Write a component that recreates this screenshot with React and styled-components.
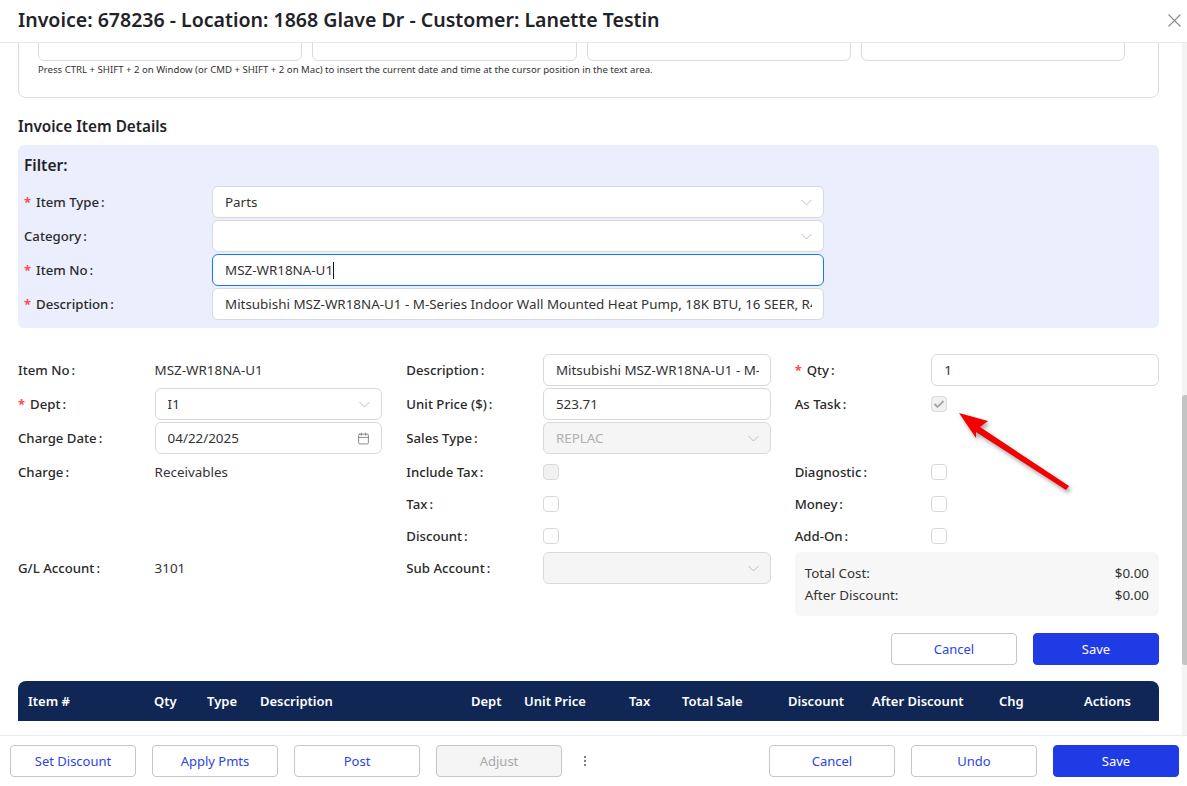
import React from 'react';
import styled, { createGlobalStyle } from 'styled-components';
import { Calendar } from 'lucide-react';

const GlobalStyle = createGlobalStyle`
  html, body {
    margin: 0;
    padding: 0;
    height: 100%;
    overflow: hidden;
    background: #ffffff;
  }
  body {
    font-family: "Noto Sans", "Open Sans", sans-serif;
    font-size: 13.4px;
    color: #333333;
  }
  * {
    box-sizing: border-box;
  }
`;

const Modal = styled.div`
  position: relative;
  display: flex;
  flex-direction: column;
  height: 786px;
  overflow: hidden;
`;

const Header = styled.header`
  flex: none;
  display: flex;
  align-items: center;
  justify-content: space-between;
  height: 43px;
  padding: 0 6px 2px 18px;
  border-bottom: 1px solid #ebebeb;
`;

const Title = styled.h1`
  margin: 0;
  font-size: 19.55px;
  line-height: 26px;
  font-weight: 600;
  color: #1f2329;
`;

const CloseIcon = styled.svg`
  width: 13px;
  height: 13px;
  stroke: #8c8c8c;
  stroke-width: 1.1;
  fill: none;
`;

const Body = styled.div`
  flex: 1;
  min-height: 0;
  display: flex;
  overflow: hidden;
`;

const Content = styled.main`
  flex: 1;
  min-width: 0;
  padding: 0 23px 0 18px;
`;

const ScrollTrack = styled.div`
  flex: none;
  width: 5px;
  background: #f4f4f4;
`;

const ScrollThumb = styled.div`
  height: 270px;
  margin-top: 352px;
  background: #c4c4c4;
  border-radius: 3px 0 0 3px;
`;

const NotesCard = styled.section`
  margin-top: -51px;
  padding: 20px 33px 20px 19px;
  border: 1px solid #dcdcdc;
  border-radius: 8px;
`;

const NotesRow = styled.div`
  display: grid;
  grid-template-columns: repeat(4, 1fr);
  column-gap: 10px;
`;

const NoteBox = styled.div`
  height: 48px;
  border: 1px solid #dcdcdc;
  border-radius: 6px;
`;

const Hint = styled.p`
  margin: 2px 0 0;
  font-size: 9.6px;
  line-height: 14px;
  color: #333333;
  white-space: nowrap;
`;

const SectionTitle = styled.h2`
  margin: 18px 0 9px;
  font-size: 15.3px;
  line-height: 20px;
  font-weight: 600;
  color: #1f2329;
`;

const FilterPanel = styled.section`
  padding: 10px 6px 6px;
  background: #ebeefd;
  border-radius: 6px;
`;

const FilterTitle = styled.h3`
  margin: 0 0 11px;
  font-size: 15.5px;
  line-height: 20px;
  font-weight: 600;
  color: #1f2329;
`;

const FilterRow = styled.div`
  display: grid;
  grid-template-columns: 188px 612px;
  height: 34px;
`;

const Label = styled.label`
  display: flex;
  align-items: center;
  height: 32px;
  font-size: 13.2px;
  font-weight: 500;
  color: #2a2a2a;
  white-space: nowrap;

  &::before {
    content: ${(p) => (p.$required ? '"*"' : 'none')};
    width: 12px;
    color: #ff4d4f;
    font-size: 13px;
    font-weight: 700;
  }

  &::after {
    content: ':';
    margin-left: 2px;
  }
`;

const Control = styled.div`
  display: flex;
  align-items: center;
  min-width: 0;
  height: 32px;
  padding: 0 11px 0 12px;
  background: ${(p) => (p.$disabled ? '#f5f5f5' : '#ffffff')};
  border: 1px solid ${(p) => (p.$focused ? '#1677ff' : '#d9d9d9')};
  border-radius: 6px;
  color: ${(p) => (p.$disabled ? '#b0b0b0' : '#333333')};
`;

const ControlText = styled.span`
  flex: ${(p) => (p.$fit ? 'none' : '1')};
  min-width: 0;
  overflow: hidden;
  white-space: nowrap;
`;

const Caret = styled.span`
  width: 1px;
  height: 17px;
  background: #111111;
`;

const Chevron = styled.svg`
  flex: none;
  width: 11px;
  height: 7px;
  margin-left: 6px;
  fill: none;
  stroke: #bdbdbd;
  stroke-width: 1;
`;

const DateIcon = styled(Calendar)`
  flex: none;
  width: 13px;
  height: 13px;
  color: #777777;
`;

const DetailsGrid = styled.section`
  display: grid;
  grid-template-columns: repeat(3, minmax(0, 1fr));
  grid-template-rows: 34px 34px 34px 32px 32px 32px auto;
  column-gap: 24px;
  margin-top: 26px;
`;

const Field = styled.div`
  display: grid;
  grid-template-columns: minmax(0, 37.5fr) minmax(0, 62.5fr);
  align-items: start;
`;

const Value = styled.span`
  display: flex;
  align-items: center;
  height: 32px;
  color: #333333;
`;

const CheckCell = styled.div`
  display: flex;
  align-items: center;
  height: 32px;
`;

const CheckBox = styled.span`
  display: flex;
  align-items: center;
  justify-content: center;
  width: 16px;
  height: 16px;
  background: ${(p) => (p.$disabled ? '#f1f1f1' : '#ffffff')};
  border: 1px solid #d9d9d9;
  border-radius: 4px;
`;

const CheckMark = styled.svg`
  width: 12px;
  height: 10px;
  fill: none;
  stroke: #a6a6a6;
  stroke-width: 1.8;
`;

const Totals = styled.div`
  height: 64px;
  padding: 10px 10px 0;
  background: #f7f7f7;
  border-radius: 6px;
`;

const TotalRow = styled.div`
  display: flex;
  justify-content: space-between;
  height: 22px;
  line-height: 22px;
  color: #333333;
`;

const FormActions = styled.div`
  display: flex;
  justify-content: flex-end;
  gap: 16px;
  margin: 17px 0 16px;
`;

const Button = styled.button`
  width: 126px;
  height: 32px;
  padding: 0;
  font-family: inherit;
  font-size: 13px;
  color: ${(p) => (p.$primary ? '#ffffff' : p.disabled ? '#a8a8a8' : '#2b45e6')};
  background: ${(p) => (p.$primary ? '#1f3be6' : p.disabled ? '#f5f5f5' : '#ffffff')};
  border: 1px solid ${(p) => (p.$primary ? '#1f3be6' : '#c6c6c6')};
  border-radius: 4px;
`;

const TableHead = styled.div`
  display: grid;
  grid-template-columns: 126px 53px 53px 211px 53px 105px 53px 106px 84px 127px 85px 1fr;
  align-items: center;
  height: 40px;
  padding-left: 10px;
  background: #102756;
  border-radius: 8px 8px 0 0;
  color: #ffffff;
  font-size: 13px;
  font-weight: 600;
`;

const Footer = styled.footer`
  flex: none;
  display: flex;
  align-items: center;
  justify-content: space-between;
  height: 51px;
  padding: 0 8px 0 10px;
  border-top: 1px solid #ebebeb;
`;

const ButtonGroup = styled.div`
  display: flex;
  align-items: center;
  gap: 16px;
`;

const MoreIcon = styled.svg`
  width: 14px;
  height: 14px;
  fill: #555555;
`;

const ArrowOverlay = styled.svg`
  position: absolute;
  left: 950px;
  top: 405px;
  width: 130px;
  height: 95px;
  overflow: visible;
  filter: drop-shadow(2px 3px 2px rgba(0, 0, 0, 0.35));
`;

const DownChevron = () => (
  <Chevron viewBox="0 0 11 7">
    <polyline points="0.5,1 5.5,6 10.5,1" />
  </Chevron>
);

const SelectControl = ({ value, disabled }) => (
  <Control $disabled={disabled}>
    <ControlText>{value}</ControlText>
    <DownChevron />
  </Control>
);

const Check = ({ checked, disabled }) => (
  <CheckCell>
    <CheckBox $disabled={disabled}>
      {checked && (
        <CheckMark viewBox="0 0 12 10">
          <polyline points="1.5,5 4.5,8 10.5,2" />
        </CheckMark>
      )}
    </CheckBox>
  </CheckCell>
);

const tableColumns = [
  'Item #', 'Qty', 'Type', 'Description', 'Dept', 'Unit Price', 'Tax',
  'Total Sale', 'Discount', 'After Discount', 'Chg', 'Actions',
];

const App = () => (
  <Modal>
    <GlobalStyle />
    <Header>
      <Title>Invoice: 678236 - Location: 1868 Glave Dr - Customer: Lanette Testin</Title>
      <CloseIcon viewBox="0 0 13 13">
        <path d="M0.5 0.5 L12.5 12.5 M12.5 0.5 L0.5 12.5" />
      </CloseIcon>
    </Header>

    <Body>
      <Content>
        <NotesCard>
          <NotesRow>
            <NoteBox />
            <NoteBox />
            <NoteBox />
            <NoteBox />
          </NotesRow>
          <Hint>
            Press CTRL + SHIFT + 2 on Window (or CMD + SHIFT + 2 on Mac) to insert the current date
            and time at the cursor position in the text area.
          </Hint>
        </NotesCard>

        <SectionTitle>Invoice Item Details</SectionTitle>

        <FilterPanel>
          <FilterTitle>Filter:</FilterTitle>
          <FilterRow>
            <Label $required>Item Type</Label>
            <SelectControl value="Parts" />
          </FilterRow>
          <FilterRow>
            <Label>Category</Label>
            <SelectControl value="" />
          </FilterRow>
          <FilterRow>
            <Label $required>Item No</Label>
            <Control $focused>
              <ControlText $fit>MSZ-WR18NA-U1</ControlText>
              <Caret />
            </Control>
          </FilterRow>
          <FilterRow>
            <Label $required>Description</Label>
            <Control>
              <ControlText>
                Mitsubishi MSZ-WR18NA-U1 - M-Series Indoor Wall Mounted Heat Pump, 18K BTU, 16 SEER, R4
              </ControlText>
            </Control>
          </FilterRow>
        </FilterPanel>

        <DetailsGrid>
          <Field>
            <Label>Item No</Label>
            <Value>MSZ-WR18NA-U1</Value>
          </Field>
          <Field>
            <Label>Description</Label>
            <Control>
              <ControlText>Mitsubishi MSZ-WR18NA-U1 - M-</ControlText>
            </Control>
          </Field>
          <Field>
            <Label $required>Qty</Label>
            <Control>
              <ControlText>1</ControlText>
            </Control>
          </Field>

          <Field>
            <Label $required>Dept</Label>
            <SelectControl value="I1" />
          </Field>
          <Field>
            <Label>Unit Price ($)</Label>
            <Control>
              <ControlText>523.71</ControlText>
            </Control>
          </Field>
          <Field>
            <Label>As Task</Label>
            <Check checked disabled />
          </Field>

          <Field>
            <Label>Charge Date</Label>
            <Control>
              <ControlText>04/22/2025</ControlText>
              <DateIcon strokeWidth={1.6} />
            </Control>
          </Field>
          <Field>
            <Label>Sales Type</Label>
            <SelectControl value="REPLAC" disabled />
          </Field>
          <div />

          <Field>
            <Label>Charge</Label>
            <Value>Receivables</Value>
          </Field>
          <Field>
            <Label>Include Tax</Label>
            <Check disabled />
          </Field>
          <Field>
            <Label>Diagnostic</Label>
            <Check />
          </Field>

          <div />
          <Field>
            <Label>Tax</Label>
            <Check />
          </Field>
          <Field>
            <Label>Money</Label>
            <Check />
          </Field>

          <div />
          <Field>
            <Label>Discount</Label>
            <Check />
          </Field>
          <Field>
            <Label>Add-On</Label>
            <Check />
          </Field>

          <Field>
            <Label>G/L Account</Label>
            <Value>3101</Value>
          </Field>
          <Field>
            <Label>Sub Account</Label>
            <SelectControl value="" disabled />
          </Field>
          <Totals>
            <TotalRow>
              <span>Total Cost:</span>
              <span>$0.00</span>
            </TotalRow>
            <TotalRow>
              <span>After Discount:</span>
              <span>$0.00</span>
            </TotalRow>
          </Totals>
        </DetailsGrid>

        <FormActions>
          <Button>Cancel</Button>
          <Button $primary>Save</Button>
        </FormActions>

        <TableHead>
          {tableColumns.map((name) => (
            <span key={name}>{name}</span>
          ))}
        </TableHead>
      </Content>
      <ScrollTrack>
        <ScrollThumb />
      </ScrollTrack>
    </Body>

    <Footer>
      <ButtonGroup>
        <Button>Set Discount</Button>
        <Button>Apply Pmts</Button>
        <Button>Post</Button>
        <Button disabled>Adjust</Button>
        <MoreIcon viewBox="0 0 14 14">
          <circle cx="7" cy="3" r="1" />
          <circle cx="7" cy="7" r="1" />
          <circle cx="7" cy="11" r="1" />
        </MoreIcon>
      </ButtonGroup>
      <ButtonGroup>
        <Button>Cancel</Button>
        <Button>Undo</Button>
        <Button $primary>Save</Button>
      </ButtonGroup>
    </Footer>

    <ArrowOverlay viewBox="0 0 130 95">
      <polygon fill="#f40000" points="9,8 38,16 30,22 119,81 116,85 26,27 26,33" />
    </ArrowOverlay>
  </Modal>
);

export default App;
